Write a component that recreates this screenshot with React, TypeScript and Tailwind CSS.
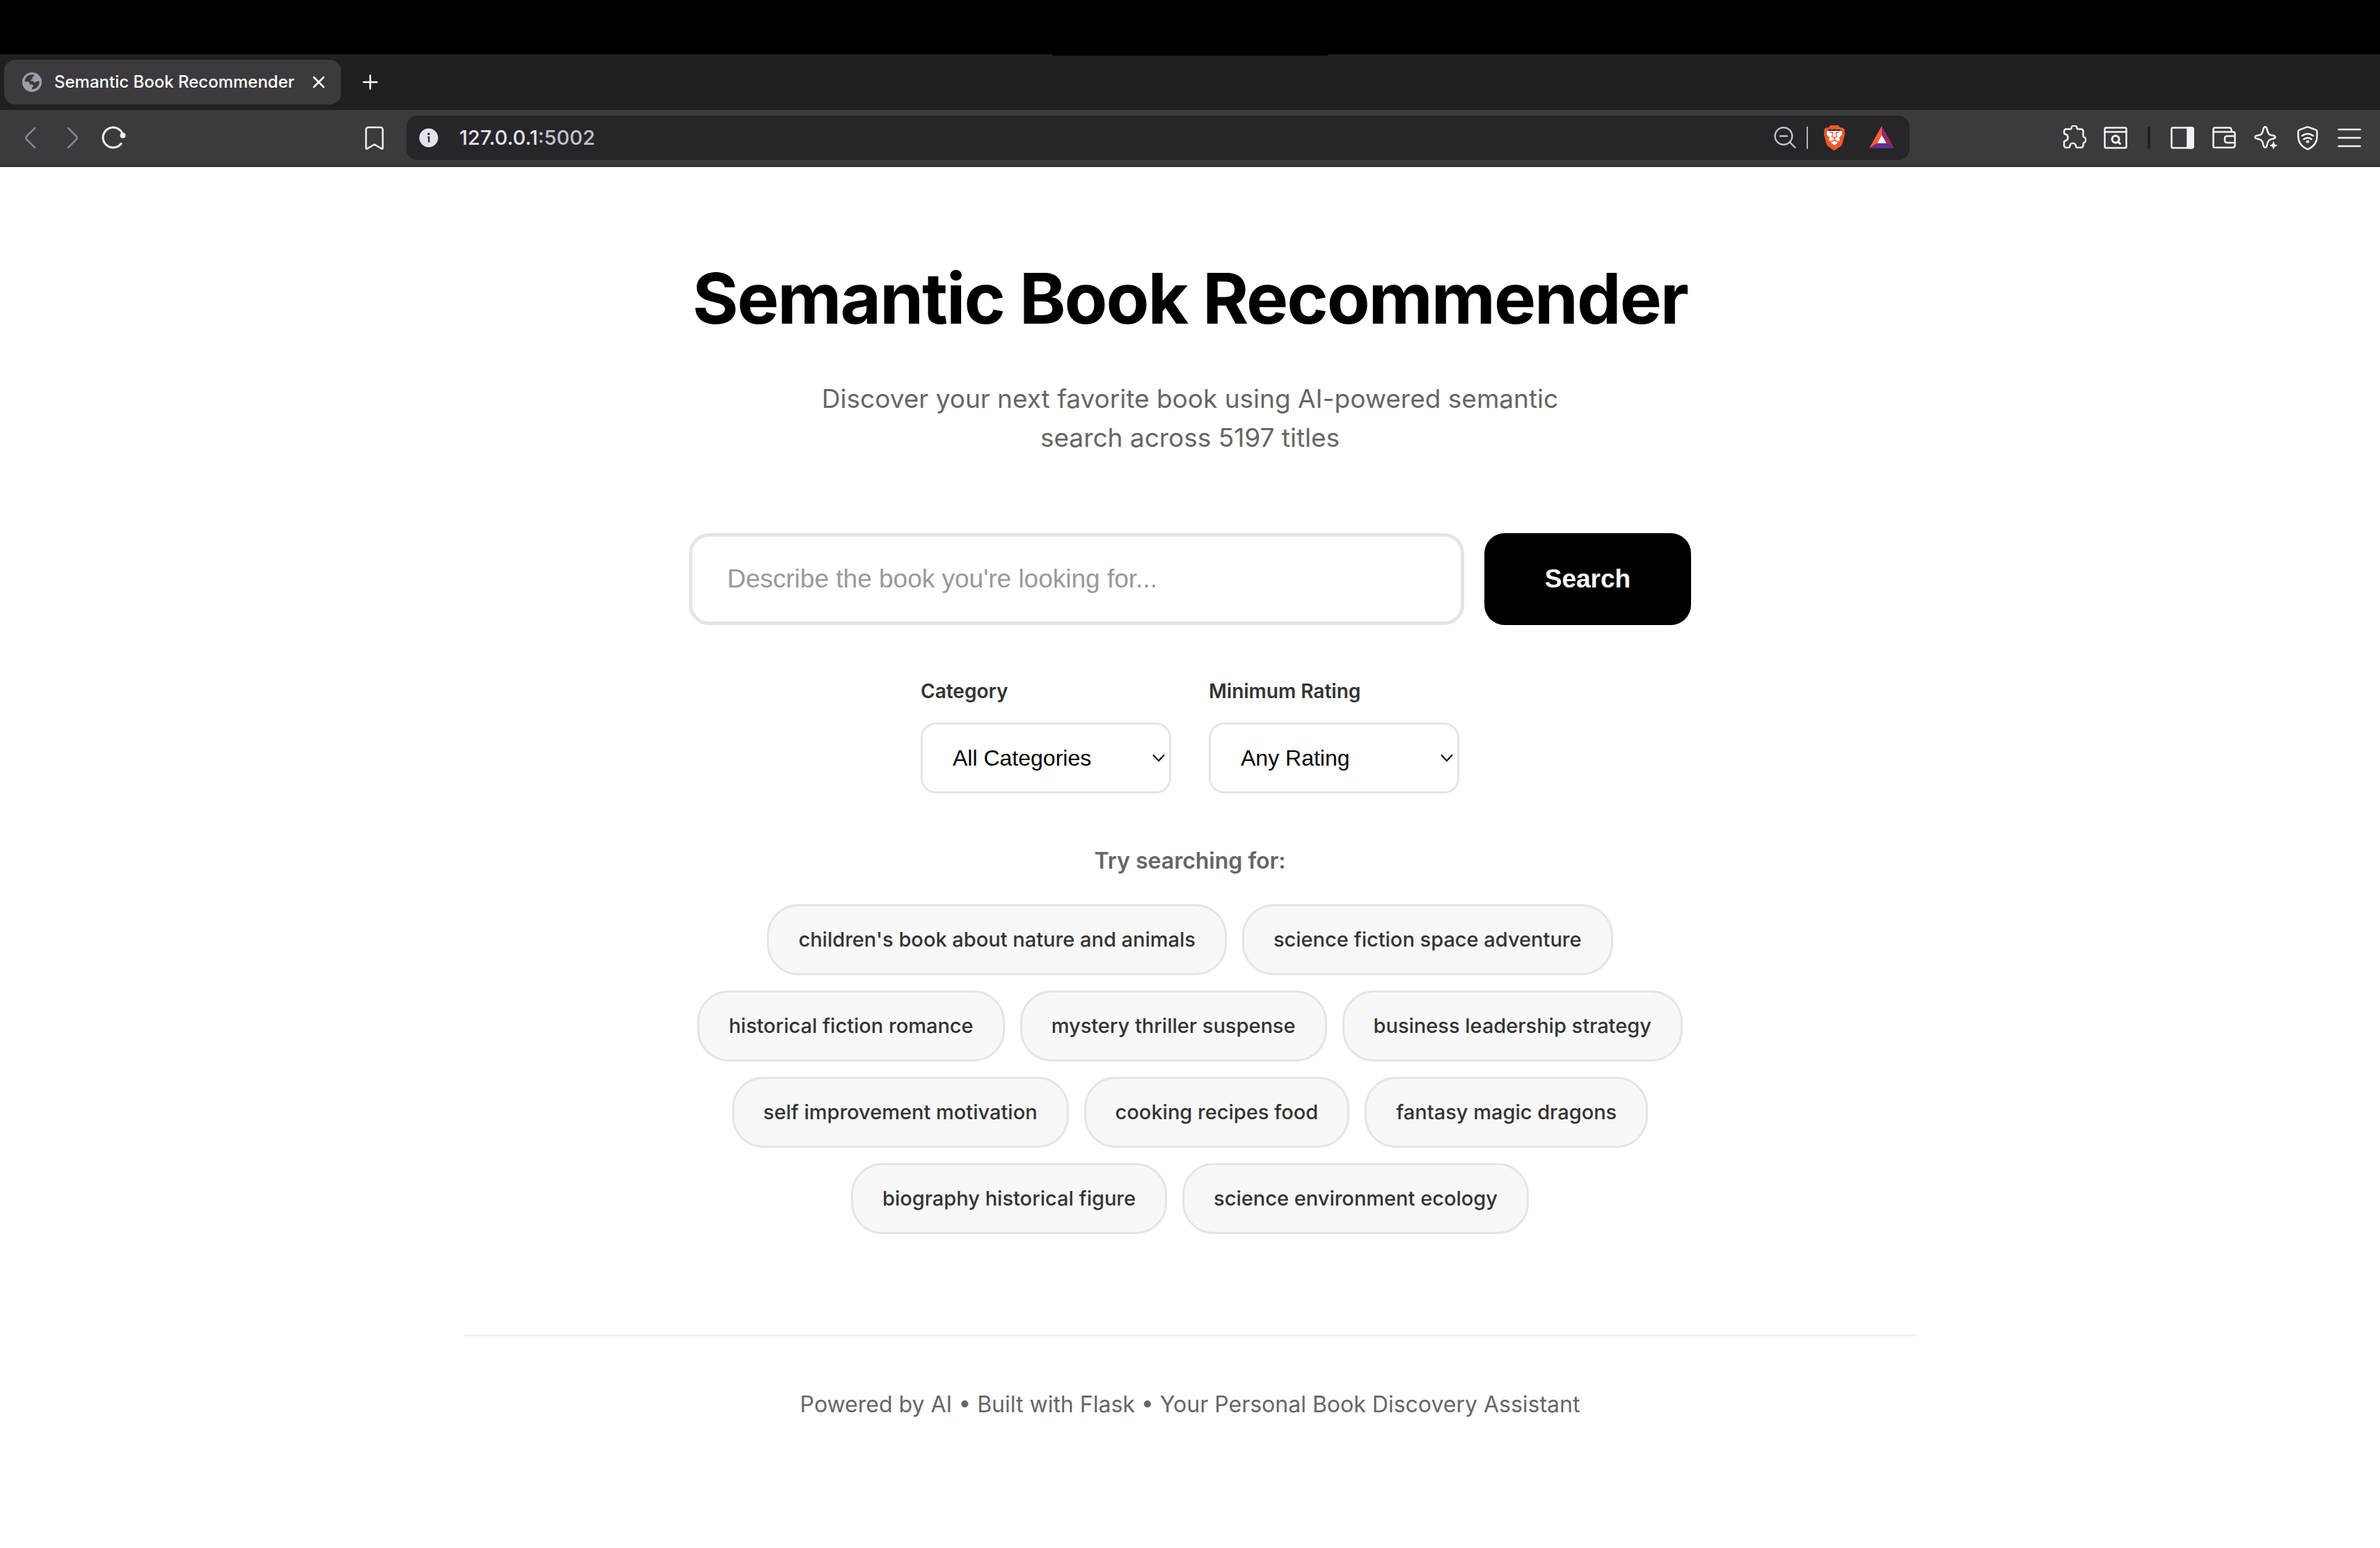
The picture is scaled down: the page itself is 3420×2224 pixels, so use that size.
import { useState, type ReactNode } from "react";
import { SiBrave } from "react-icons/si";

const suggestions = [
  "children's book about nature and animals",
  "science fiction space adventure",
  "historical fiction romance",
  "mystery thriller suspense",
  "business leadership strategy",
  "self improvement motivation",
  "cooking recipes food",
  "fantasy magic dragons",
  "biography historical figure",
  "science environment ecology",
];

function Icon({ children, width = 2.5 }: { children: ReactNode; width?: number }) {
  return (
    <svg
      viewBox="0 0 36 36"
      className="size-9 shrink-0"
      fill="none"
      stroke="currentColor"
      strokeWidth={width}
      strokeLinecap="round"
      strokeLinejoin="round"
      aria-hidden="true"
    >
      {children}
    </svg>
  );
}

function ToolButton({ label, children, className = "" }: { label: string; children: ReactNode; className?: string }) {
  return (
    <button type="button" aria-label={label} className={`flex shrink-0 ${className}`}>
      {children}
    </button>
  );
}

function TabStrip() {
  return (
    <div className="flex h-20 items-center bg-[#201f24] pl-1.5">
      <div className="flex h-16 w-[484px] items-center rounded-[16px] bg-[#3c3a3f] px-[22px] text-white">
        <svg viewBox="0 0 36 36" className="size-9 shrink-0" aria-hidden="true">
          <circle cx="18" cy="18" r="14" fill="#9aa0a6" />
          <path
            d="M7.500 17C8 12 11 8 16.500 7.300h4.800c-.3 2-1 3-2.600 3.200v2.200c0 1-1 1.500-2.500 1.500l.3 2.300h2.200c1.500 0 2 .5 2.300 1.800l2.500 0c1-2 3-2.300 5.200-1.500C28.700 22 26 27.500 18 28.400v-3.200h1.700v-2c0-1.200-.6-1.600-2-1.800l-3.500-.3v-2.600c-1-1-3.500-1.300-6.700-1.500z"
            fill="#3c3a3f"
          />
        </svg>
        <span className="ml-3.5 flex-1 whitespace-nowrap text-[24px] font-medium">Semantic Book Recommender</span>
        <ToolButton label="Close tab" className="-mr-2">
          <Icon>
            <path d="M11 11l14 14M25 11L11 25" />
          </Icon>
        </ToolButton>
      </div>
      <ToolButton label="New tab" className="ml-6 text-white">
        <Icon>
          <path d="M18 8.500v19M8.500 18h19" />
        </Icon>
      </ToolButton>
    </div>
  );
}

function Toolbar() {
  return (
    <div className="flex h-[82px] items-center border-b-2 border-[#302e33] bg-[#3c3a3f] px-[26px] text-[#f3f2f6]">
      <div className="flex gap-6">
        <ToolButton label="Back" className="text-[#88868c]">
          <Icon>
            <path d="M24 4L12 16q-1.500 2 0 4L24 32" />
          </Icon>
        </ToolButton>
        <ToolButton label="Forward" className="text-[#88868c]">
          <Icon>
            <path d="M12 4l12 12q1.500 2 0 4L12 32" />
          </Icon>
        </ToolButton>
        <ToolButton label="Reload">
          <Icon width={3}>
            <path d="M28 26.500A14.500 14.500 0 1 1 29.500 11" />
            <circle cx="30.500" cy="14.500" r="3" fill="currentColor" strokeWidth="2" />
          </Icon>
        </ToolButton>
      </div>
      <ToolButton label="Bookmark this page" className="ml-[338px]">
        <Icon>
          <path d="M9 3h18a3 3 0 0 1 3 3v26.500q0 2-1.700 1L18 27.500 7.700 33.500q-1.700 1-1.700-1V6a3 3 0 0 1 3-3z" />
        </Icon>
      </ToolButton>
      <div className="ml-7 mr-[218px] flex h-16 min-w-0 flex-1 items-center rounded-[16px] bg-[#26252a] pl-3.5 pr-[22px]">
        <svg viewBox="0 0 36 36" className="size-9 shrink-0" aria-hidden="true">
          <circle cx="18" cy="18" r="13.500" fill="#e4e2ea" />
          <circle cx="18" cy="12.500" r="1.700" fill="#26252a" />
          <path d="M16.500 17h1.800v7.500" fill="none" stroke="#26252a" strokeWidth="2.200" />
        </svg>
        <span className="ml-[26px] flex-1 text-[29px] font-medium text-[#e4e2ea]">
          127.0.0.1<span className="text-[#c4c2c9]">:5002</span>
        </span>
        <ToolButton label="Zoom" className="text-[#c4c2c9]">
          <Icon width={2.4}>
            <circle cx="15" cy="15.500" r="12.300" />
            <path d="M10 15.500h10M24 24.500l7.500 7.500" />
          </Icon>
        </ToolButton>
        <span className="ml-3 h-8 w-0.5 bg-[#b5b3ba]" />
        <ToolButton label="Brave Shields" className="relative ml-5">
          <svg viewBox="0 0 36 36" className="size-9" aria-hidden="true">
            <path d="M6 8h24l-3 16-9 8-9-8z" fill="#fff" />
          </svg>
          <SiBrave className="absolute inset-0 size-9 text-[#f1592a]" />
        </ToolButton>
        <ToolButton label="Brave Rewards" className="ml-8">
          <svg viewBox="0 0 36 36" className="size-9" aria-hidden="true">
            <path d="M18 1L0 33l11.700-7.300L18 14z" fill="#ff5b36" />
            <path d="M18 1l18 32-11.300-7.300L18 14z" fill="#97286a" />
            <path d="M0 33h36l-11.300-7.300H11.700z" fill="#662d91" />
            <path d="M18 14l6.700 11.700h-13z" fill="#fff" />
          </svg>
        </ToolButton>
      </div>
      <div className="flex items-center gap-6">
        <ToolButton label="Extensions">
          <Icon>
            <path d="M7 5.500h6q1.300 0 1.500-1.500a4 3.600 0 0 1 8 0q.2 1.500 1.500 1.500h4.500a3 3 0 0 1 3 3V15q0 1.800 1.500 2.300a4 4 0 0 1 0 7.400q-1.500.5-1.500 2.300v2a3 3 0 0 1-3 3H23q-1.500 0-2-2a4.300 4.300 0 0 0-8.600 0q-.4 2-2 2H7a3 3 0 0 1-3-3v-4.500q0-2 2-2.300a4.900 4.900 0 0 0 0-9.400q-2-.3-2-2.300V8.500a3 3 0 0 1 3-3z" />
          </Icon>
        </ToolButton>
        <ToolButton label="Search tabs">
          <Icon>
            <rect x="2.500" y="3.500" width="31" height="29" rx="2" />
            <path d="M2.500 9.500h31" />
            <circle cx="18" cy="20" r="5" strokeWidth="3" />
            <path d="M21.800 23.800l2.700 2.700" strokeWidth="3" />
          </Icon>
        </ToolButton>
        <span className="mx-1 h-8 w-1 rounded-full bg-[#201f24]" />
        <ToolButton label="Sidebar">
          <Icon>
            <rect x="2.500" y="3.500" width="31" height="29" rx="2" />
            <path d="M25.500 3.500h6a2 2 0 0 1 2 2v25a2 2 0 0 1-2 2h-6z" fill="currentColor" />
          </Icon>
        </ToolButton>
        <ToolButton label="Wallet">
          <Icon>
            <path d="M2.500 9.500V5.500a2 2 0 0 1 2-2H26q1.500 0 2 1.500l.7 2.500M2.500 9.500H31a2.500 2.500 0 0 1 2.500 2.500v17a3 3 0 0 1-3 3h-26a2 2 0 0 1-2-2zM33.500 15.500H22a3 3 0 0 0-3 3V22a3 3 0 0 0 3 3h11.500" />
          </Icon>
        </ToolButton>
        <ToolButton label="Leo AI">
          <Icon>
            <path d="M17 2.300c-2 0-2.300 1.500-2.800 4C13 12 11.500 14 6.500 14.500c-2.500.4-4 .8-4 2.500s1.500 2.200 4 2.600c5 .7 6.800 3 7.700 8.300.5 2.400.8 4 2.800 4s2.300-1.600 2.800-4c.9-5.300 2.700-7.600 7.700-8.300 2.500-.4 4-.9 4-2.600s-1.500-2.100-4-2.500c-5-.5-6.500-2.500-7.700-8.200-.5-2.500-.8-4-2.800-4z" />
            <path d="M29 24l1.500 3.500L34 29l-3.500 1.500L29 34l-1.500-3.500L24 29l3.500-1.500z" fill="currentColor" strokeWidth="1" />
          </Icon>
        </ToolButton>
        <ToolButton label="VPN">
          <Icon>
            <path d="M16.800 2.600L6 6.600Q4.500 7.200 4.500 9v7c0 9 5 14.500 12.200 18q1.300.6 2.600 0C26.500 30.500 31.500 25 31.500 16V9q0-1.800-1.500-2.400L19.200 2.600q-1.200-.4-2.400 0z" />
            <path d="M10 15q8-5.500 16 0M12.500 20q5.500-4 11 0" />
            <ellipse cx="18" cy="23.500" rx="1.600" ry="1" fill="currentColor" strokeWidth="2" />
          </Icon>
        </ToolButton>
        <ToolButton label="Menu">
          <Icon>
            <path d="M2.500 6h31M2.500 18h31M2.500 30h31" />
          </Icon>
        </ToolButton>
      </div>
    </div>
  );
}

function Filter({ id, label, options }: { id: string; label: string; options: string[] }) {
  return (
    <div className="flex w-[360px] flex-col gap-[22px]">
      <label htmlFor={id} className="text-[28px] leading-[46px] font-semibold text-[#333]">
        {label}
      </label>
      <div className="relative">
        <select
          id={id}
          className="h-[102px] w-full appearance-none rounded-[22px] border-3 border-[#e5e5e5] bg-white px-[43px] font-['Liberation_Sans',sans-serif] text-[32px] text-black"
        >
          {options.map((option) => (
            <option key={option}>{option}</option>
          ))}
        </select>
        <svg
          viewBox="0 0 18 12"
          className="pointer-events-none absolute top-[45px] right-[9px] h-3 w-[18px]"
          fill="none"
          stroke="#000"
          strokeWidth="2"
          strokeLinecap="round"
          strokeLinejoin="round"
          aria-hidden="true"
        >
          <path d="M1.500 2L9 10l7.500-8" />
        </svg>
      </div>
    </div>
  );
}

export default function App() {
  const [query, setQuery] = useState("");

  return (
    <div className="min-h-screen bg-white font-[Inter,sans-serif]">
      <header>
        <div className="h-[78px] bg-black" />
        <div className="relative">
          <div className="absolute inset-x-0 top-0 mx-auto h-0.5 w-[396px] rounded-b-sm bg-black" />
          <TabStrip />
        </div>
        <Toolbar />
      </header>

      <main className="mx-auto flex max-w-[2088px] flex-col items-center pt-32 text-center">
        <h1 className="text-[101px] leading-[121px] font-bold tracking-[-2px] text-black">Semantic Book Recommender</h1>
        <p className="mt-14 max-w-[1080px] text-[37px] leading-[56px] text-[#666]">
          Discover your next favorite book using AI-powered semantic search across 5197 titles
        </p>

        <form className="mt-[109px] flex w-full max-w-[1440px] gap-[29px]" onSubmit={(event) => event.preventDefault()}>
          <input
            type="text"
            aria-label="Book description"
            value={query}
            onChange={(event) => setQuery(event.target.value)}
            placeholder="Describe the book you're looking for..."
            className="h-[132px] min-w-0 flex-1 rounded-[29px] border-5 border-[#e5e5e5] bg-white px-[50px] font-['Liberation_Sans',sans-serif] text-[37px] text-black placeholder:text-[#999]"
          />
          <button
            type="submit"
            className="w-[297px] rounded-[29px] bg-black font-['Liberation_Sans',sans-serif] text-[37px] font-bold text-white"
          >
            Search
          </button>
        </form>

        <div className="mt-[72px] flex justify-center gap-[54px] text-left">
          <Filter id="category" label="Category" options={["All Categories", "Fiction", "Nonfiction"]} />
          <Filter id="rating" label="Minimum Rating" options={["Any Rating", "3+ Stars", "4+ Stars"]} />
        </div>

        <h2 className="mt-[71px] text-[32px] leading-[52px] font-semibold text-[#666]">Try searching for:</h2>
        <div className="mt-9 flex max-w-[1440px] flex-wrap justify-center gap-[22px]">
          {suggestions.map((text) => (
            <button
              key={text}
              type="button"
              onClick={() => setQuery(text)}
              className="h-[102px] rounded-[45px] border-3 border-[#e5e5e5] bg-[#f8f8f8] px-[42px] text-[29px] font-medium text-[#333]"
            >
              {text}
            </button>
          ))}
        </div>

        <footer className="mt-36 w-full border-t-3 border-[#f0f0f0] pt-[72px] text-[32px] leading-[52px] text-[#666]">
          Powered by AI • Built with Flask • Your Personal Book Discovery Assistant
        </footer>
      </main>
    </div>
  );
}
